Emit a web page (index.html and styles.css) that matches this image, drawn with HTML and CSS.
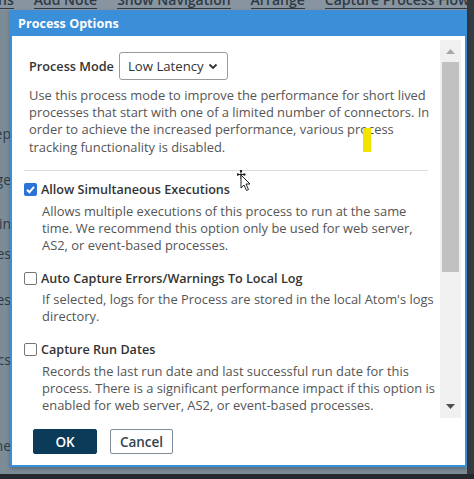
FILE: index.html
```html
<!DOCTYPE html>
<html>
<head>
<meta charset="utf-8">
<link rel="stylesheet" href="styles.css">
</head>
<body>
<div class="screen">
  <div class="topbar">
    <span class="tb-item tb-first">ns</span>
    <span class="tb-item">Add Note</span>
    <span class="tb-item">Show Navigation</span>
    <span class="tb-item">Arrange</span>
    <span class="tb-item">Capture Process Flow</span>
  </div>
  <div class="sidemenu">
    <span class="sm sm1">Step</span>
    <span class="sm sm2">Mange</span>
    <span class="sm sm3">Admin</span>
    <span class="sm sm4">Rules</span>
    <span class="sm sm5">Files</span>
    <span class="sm sm6">Procs</span>
    <span class="sm sm7">Name</span>
  </div>
  <div class="right-strip"></div>
  <div class="bottom-strip"></div>

  <div class="dialog">
    <div class="dialog-header">Process Options</div>
    <div class="dialog-main">
      <div class="dialog-content">
        <div class="mode-section">
          <div class="mode-row">
            <span class="mode-label">Process Mode</span>
            <div class="select">
              <span>Low Latency</span>
              <svg class="chev" width="10" height="7" viewBox="0 0 10 7"><path d="M1.5 1.5 L5 5 L8.5 1.5" fill="none" stroke="#333" stroke-width="1.8"/></svg>
            </div>
          </div>
          <p class="mode-desc">Use this process mode to improve the performance for short lived processes that start with one of a limited number of connectors. In order to achieve the increased performance, various process tracking functionality is disabled.</p>
        </div>
        <div class="divider"></div>
        <div class="option">
          <div class="opt-head">
            <span class="cb checked"><svg width="13" height="13" viewBox="0 0 13 13"><path d="M3 6.8 L5.4 9.2 L10 3.8" fill="none" stroke="#fff" stroke-width="2"/></svg></span>
            <span class="opt-label">Allow Simultaneous Executions</span>
          </div>
          <p class="opt-desc">Allows multiple executions of this process to run at the same time. We recommend this option only be used for web server, AS2, or event-based processes.</p>
        </div>
        <div class="option">
          <div class="opt-head">
            <span class="cb"></span>
            <span class="opt-label">Auto Capture Errors/Warnings To Local Log</span>
          </div>
          <p class="opt-desc">If selected, logs for the Process are stored in the local Atom's logs directory.</p>
        </div>
        <div class="option">
          <div class="opt-head">
            <span class="cb"></span>
            <span class="opt-label">Capture Run Dates</span>
          </div>
          <p class="opt-desc">Records the last run date and last successful run date for this process. There is a significant performance impact if this option is enabled for web server, AS2, or event-based processes.</p>
        </div>
      </div>
      <div class="scrollbar">
        <div class="sb-btn"><svg width="9" height="5" viewBox="0 0 9 5"><path d="M0 5 L4.5 0 L9 5Z" fill="#a8a8a8"/></svg></div>
        <div class="sb-thumb"></div>
        <div class="sb-track"></div>
        <div class="sb-btn sb-down"><svg width="9" height="5" viewBox="0 0 9 5"><path d="M0 0 L4.5 5 L9 0Z" fill="#505050"/></svg></div>
      </div>
    </div>
    <div class="dialog-footer">
      <button class="btn btn-ok">OK</button>
      <button class="btn btn-cancel">Cancel</button>
    </div>
  </div>

  <div class="highlight"></div>
  <svg class="cursor" width="18" height="24" viewBox="0 0 18 24">
    <path d="M4 0.5 V9 M0.5 4.5 H7.5" stroke="#222" stroke-width="1" fill="none"/>
    <circle cx="4" cy="1" r="1.2" fill="#222"/>
    <circle cx="0.8" cy="4.5" r="1.2" fill="#222"/>
    <circle cx="7.3" cy="4.5" r="1.2" fill="#222"/>
    <path d="M4 5 L4 18 L7 15 L9.5 20.5 L11.5 19.5 L9 14 L13 14 Z" fill="#fff" stroke="#222" stroke-width="1"/>
  </svg>
</div>
</body>
</html>
```

FILE: styles.css
```css
* { box-sizing: border-box; }
html, body { margin: 0; padding: 0; }
body {
  width: 474px;
  height: 479px;
  overflow: hidden;
  font-family: "Open Sans", "Noto Sans", sans-serif;
  background: #7a8b96;
}
.screen {
  position: relative;
  width: 474px;
  height: 479px;
  background: #7c8c97;
  overflow: hidden;
}
.topbar {
  position: absolute;
  left: 0;
  top: -8px;
  height: 18px;
  width: 474px;
  background: #8895a0;
  display: flex;
  font-size: 14px;
  font-weight: 600;
  color: #2e3a44;
  line-height: 16px;
}
.tb-item {
  margin-left: 20px;
  border-bottom: 1px solid #2e3a44;
  height: 17px;
  white-space: nowrap;
}
.tb-first { margin-left: -2px; }
.sidemenu {
  position: absolute;
  left: 0;
  top: 0;
  width: 10px;
  height: 479px;
  overflow: hidden;
  font-size: 14px;
  color: #2e3c46;
}
.sm { position: absolute; right: -1px; white-space: nowrap; }
.sm1 { top: 124px; }
.sm2 { top: 170px; }
.sm3 { top: 214px; }
.sm4 { top: 244px; }
.sm5 { top: 290px; }
.sm6 { top: 350px; }
.sm7 { top: 436px; }
.right-strip {
  position: absolute;
  left: 467px;
  top: 0;
  width: 7px;
  height: 479px;
  background: #343c42;
}
.bottom-strip {
  position: absolute;
  left: 0;
  top: 474px;
  width: 474px;
  height: 5px;
  background: #23292d;
}
.dialog {
  position: absolute;
  left: 10px;
  top: 10px;
  width: 457px;
  height: 457px;
  border: 2px solid #3b8ed8;
  border-top: 0;
  background: #fff;
  display: flex;
  flex-direction: column;
  box-shadow: 0 2px 4px rgba(0,0,0,0.25);
}
.dialog-header {
  height: 26px;
  margin: 0 -2px;
  background: #3b8ed8;
  color: #fff;
  font-weight: 700;
  font-size: 12.6px;
  line-height: 27px;
  padding-left: 8px;
}
.dialog-main {
  display: flex;
  height: 384px;
  padding: 4px 4px 0 0;
}
.dialog-content {
  flex: 1;
  overflow: hidden;
  padding: 0 2px 0 12px;
}
.mode-section { padding: 12px 0 0 5px; }
.mode-row {
  display: flex;
  align-items: center;
  gap: 5px;
}
.mode-label {
  font-size: 12.7px;
  font-weight: 600;
  color: #333;
  white-space: nowrap;
}
.select {
  flex-shrink: 0;
  width: 109px;
  height: 28px;
  border: 1px solid #9a9a9a;
  border-radius: 3px;
  display: flex;
  align-items: center;
  justify-content: space-between;
  padding: 0 9px 0 8px;
  font-size: 13.2px;
  color: #333;
  white-space: nowrap;
}
.chev { margin-top: 1px; }
.mode-desc {
  margin: 7px 0 0;
  font-size: 12.9px;
  line-height: 17.2px;
  color: #555;
}
.divider {
  height: 1px;
  background: #dcdcdc;
  margin: 14px 10px 0 0;
}
.option { margin-top: 10px; }
.option + .option { margin-top: 15.5px; }
.opt-head {
  display: flex;
  align-items: center;
  gap: 4px;
  height: 18px;
}
.cb {
  width: 13px;
  height: 13px;
  border: 1px solid #767676;
  border-radius: 2px;
  background: #fff;
  display: inline-flex;
}
.cb.checked {
  border: 0;
  background: #2b73d6;
}
.opt-label {
  font-size: 12.6px;
  font-weight: 600;
  color: #333;
}
.opt-desc {
  margin: 4px 0 0 18px;
  font-size: 12.9px;
  line-height: 17px;
  color: #555;
}
.scrollbar {
  width: 21px;
  display: flex;
  flex-direction: column;
  background: #f0f0f0;
  height: 378px;
}
.sb-btn {
  height: 22px;
  display: flex;
  align-items: center;
  justify-content: center;
}
.sb-down { height: 24px; }
.sb-thumb {
  height: 210px;
  margin: 0 2px;
  background: #c1c1c1;
}
.sb-track { flex: 1; }
.dialog-footer {
  display: flex;
  gap: 13px;
  padding: 9px 0 0 21px;
}
.btn {
  height: 25px;
  font-family: "Open Sans", "Noto Sans", sans-serif;
  font-size: 13.5px;
  font-weight: 600;
  border-radius: 2px;
  padding: 0;
}
.btn-ok {
  width: 64px;
  background: #0c3a59;
  color: #fff;
  border: 1px solid #0c3a59;
}
.btn-cancel {
  width: 63px;
  background: #fff;
  color: #33444f;
  border: 1px solid #7d8c96;
}
.highlight {
  position: absolute;
  left: 363px;
  top: 128px;
  width: 8px;
  height: 24px;
  background: #f2e400;
}
.cursor {
  position: absolute;
  left: 237px;
  top: 170px;
}
```
